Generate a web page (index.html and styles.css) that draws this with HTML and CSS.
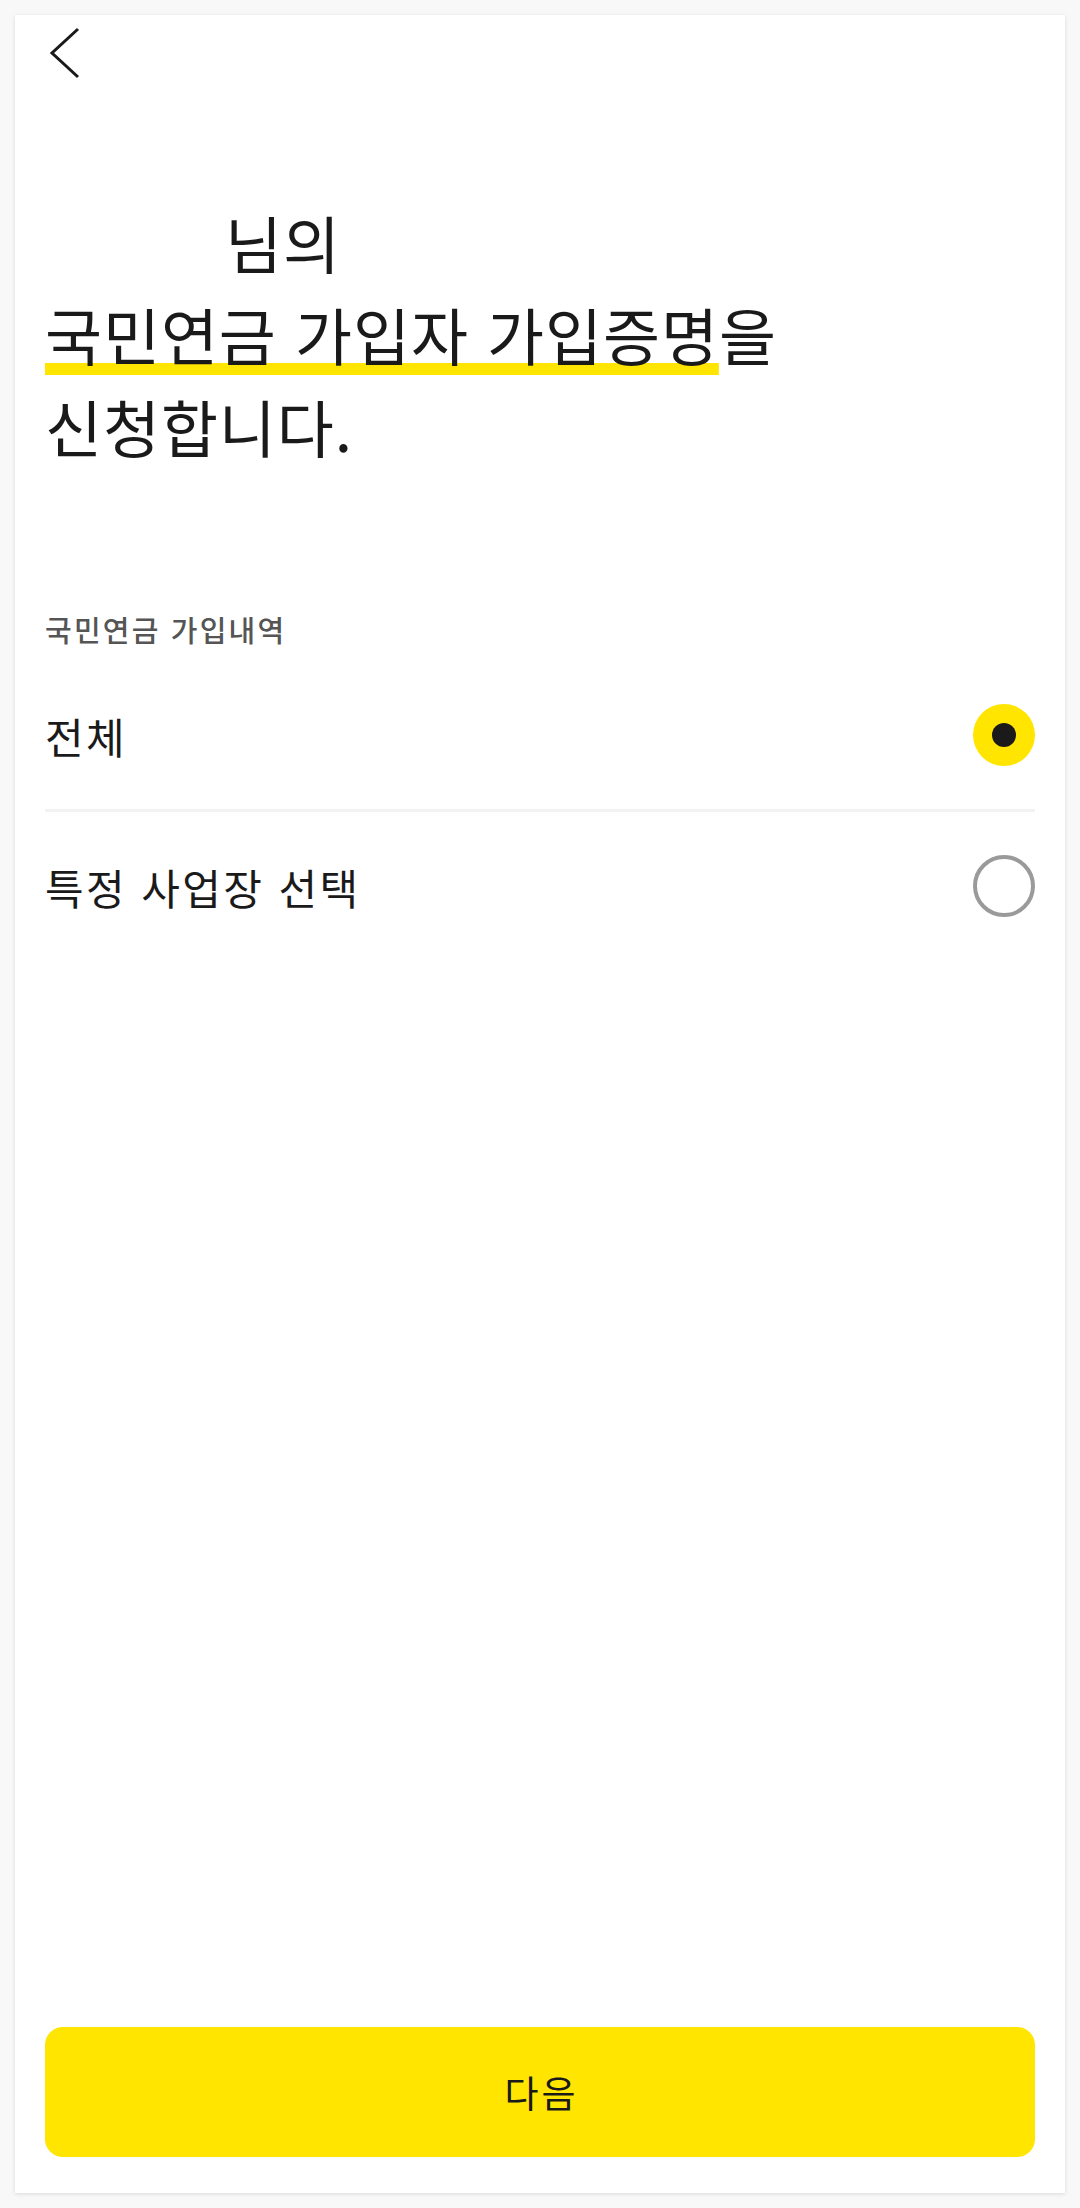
FILE: index.html
```html
<!DOCTYPE html>
<html lang="ko">
<head>
<meta charset="utf-8">
<title>국민연금 가입자 가입증명 신청</title>
<link rel="stylesheet" href="styles.css">
</head>
<body>
<div class="card">
  <div class="topbar">
    <button class="back" aria-label="뒤로">
      <svg width="32" height="54" viewBox="0 0 32 54"><polyline points="29,3 3,27 29,51" fill="none" stroke="#1a1a1a" stroke-width="3"/></svg>
    </button>
  </div>
  <h1 class="title"><span class="name"></span>님의<br><span class="hl">국민연금 가입자 가입증명</span>을<br>신청합니다.</h1>
  <div class="label">국민연금 가입내역</div>
  <div class="options">
    <div class="option">
      <span class="opt-text">전체</span>
      <span class="radio on"><span class="dot"></span></span>
    </div>
    <div class="divider"></div>
    <div class="option">
      <span class="opt-text">특정 사업장 선택</span>
      <span class="radio"></span>
    </div>
  </div>
  <div class="spacer"></div>
  <button class="next">다음</button>
</div>
</body>
</html>
```
FILE: styles.css
```css
* { box-sizing: border-box; }
html, body { margin: 0; padding: 0; }
body {
  background: #f8f8f8;
  padding: 15px;
  font-family: "Noto Sans CJK KR", "Noto Sans", sans-serif;
  color: #1a1a1a;
}
.card {
  background: #fff;
  height: 2178px;
  display: flex;
  flex-direction: column;
  padding: 0 30px 36px;
  box-shadow: 0 1px 4px rgba(0,0,0,0.13);
}
.topbar {
  height: 181px;
  padding-top: 11px;
}
.back {
  border: 0;
  background: none;
  padding: 0;
  margin-left: 4px;
  display: block;
}
.back svg { display: block; }
.title {
  margin: 0;
  font-size: 62px;
  font-weight: 400;
  line-height: 92px;
  letter-spacing: 0.9px;
}
.name {
  display: inline-block;
  width: 180px;
}
.hl {
  text-decoration: underline;
  text-decoration-color: #ffe500;
  text-decoration-thickness: 12px;
  text-underline-offset: 2px;
  text-decoration-skip-ink: none;
}
.label {
  margin-top: 137px;
  font-size: 29px;
  line-height: 40px;
  font-weight: 500;
  letter-spacing: 2.2px;
  color: #555;
}
.options {
  margin-top: 12px;
}
.option {
  height: 148px;
  display: flex;
  align-items: center;
  justify-content: space-between;
}
.opt-text {
  font-size: 42px;
  letter-spacing: 2.4px;
}
.divider {
  height: 3px;
  background: #f2f2f2;
}
.radio {
  width: 62px;
  height: 62px;
  border-radius: 50%;
  border: 4px solid #9a9a9a;
  display: flex;
  align-items: center;
  justify-content: center;
}
.radio.on {
  border: 0;
  background: #ffe500;
}
.dot {
  width: 24px;
  height: 24px;
  border-radius: 50%;
  background: #1a1a1a;
}
.spacer { flex: 1; }
.next {
  height: 130px;
  border: 0;
  border-radius: 18px;
  background: #ffe500;
  font-family: inherit;
  font-size: 37px;
  letter-spacing: 3px;
  text-indent: 3px;
  color: #1a1a1a;
}
```
